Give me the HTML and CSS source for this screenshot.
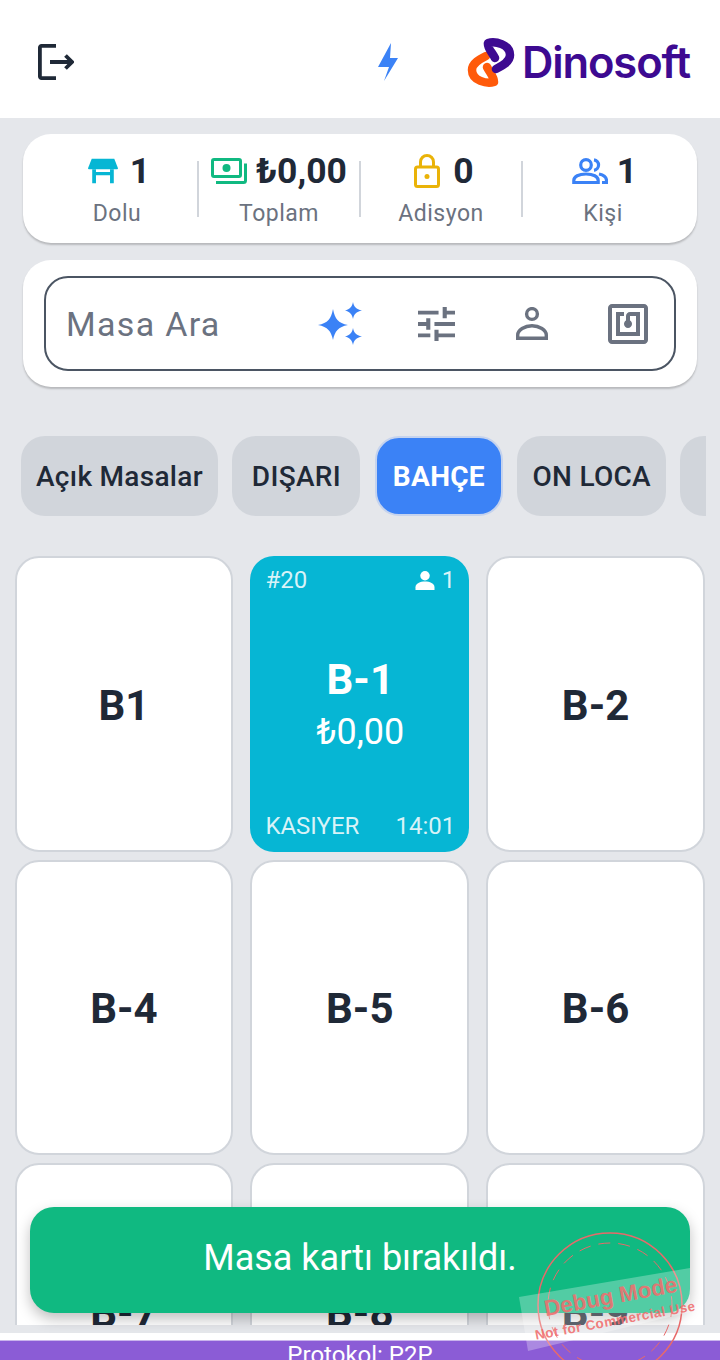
FILE: index.html
```html
<!DOCTYPE html>
<html lang="tr">
<head>
    <meta charset="UTF-8">
    <meta name="viewport" content="width=device-width, initial-scale=1.0">
    <title>Masalar</title>
    <link rel="stylesheet" href="styles.css">
</head>
<body>

    <!-- Top bar -->
    <div class="topbar">
        <svg class="logout-icon" viewBox="0 0 36 36" fill="none" stroke="#1f2937" stroke-width="3.800">
            <path d="M18 1.900H3.500a1.600 1.600 0 0 0-1.600 1.600v29a1.600 1.600 0 0 0 1.600 1.600H18"/>
            <path d="M12 18h22M27.500 11.500 34 18l-6.500 6.500"/>
        </svg>
        <svg class="bolt-icon" viewBox="0 0 22 38" fill="#3b82f6">
            <path d="M14 0 1 24h11L7 38 21 15h-8z"/>
        </svg>
        <div class="logo">
            <svg class="logo-mark" viewBox="0 0 56 56" fill="none" stroke-width="8.500" stroke-linecap="round" stroke-linejoin="round">
                <path stroke="#ff5a0a" d="M24 32C27 38 31 42 31 47C24 49 9 46 9 35C9 28 17 24 23 21"/>
                <path stroke="#3d0a91" d="M32 23C29 17 24 13 25 8C32 6 47 9 47 20C47 27 39 31 33 34"/>
            </svg>
            <span class="logo-text">Dinosoft</span>
        </div>
    </div>

    <!-- Summary -->
    <div class="card stats">
        <div class="stat">
            <div class="stat-value">
                <svg class="stat-icon table-icon" viewBox="0 0 32 26" fill="#06b6d4"><path d="M4 0h24l4 10a1 1 0 0 1-1 1H1a1 1 0 0 1-1-1z"/><path d="M4.500 11h4v3h15v-3h4v15h-4V17.500h-15V26h-4z"/></svg>
                <span>1</span>
            </div>
            <div class="stat-label">Dolu</div>
        </div>
        <div class="stat">
            <div class="stat-value">
                <svg class="stat-icon" viewBox="0 0 36 26" fill="none" stroke="#10b981" stroke-width="3"><rect x="1.500" y="1.500" width="28" height="17" rx="1.500"/><circle cx="15.500" cy="10" r="4" fill="#10b981" stroke="none"/><path d="M34.500 5.500v17a2 2 0 0 1-2 2H5"/></svg>
                <span>₺0,00</span>
            </div>
            <div class="stat-label">Toplam</div>
        </div>
        <div class="stat">
            <div class="stat-value">
                <svg class="stat-icon lock" viewBox="0 0 26 34" fill="none" stroke="#eab308" stroke-width="3"><rect x="1.500" y="13" width="23" height="19.500" rx="2"/><path d="M6.500 13V8a6.500 6.500 0 0 1 13 0v5"/><circle cx="13" cy="22.500" r="2.500" fill="#eab308" stroke="none"/></svg>
                <span>0</span>
            </div>
            <div class="stat-label">Adisyon</div>
        </div>
        <div class="stat">
            <div class="stat-value">
                <svg class="stat-icon users" viewBox="0 0 36 26" fill="none" stroke="#3b82f6" stroke-width="3.200"><circle cx="14" cy="7" r="5.300"/><path d="M1.800 24.500v-2c0-4 5-6.500 12.200-6.500s12.200 2.500 12.200 6.500v2z"/><path d="M22 1.800a5.300 5.300 0 0 1 0 10.500M27 16c4.500 1 7.500 3 7.500 6.500v2H30"/></svg>
                <span>1</span>
            </div>
            <div class="stat-label">Kişi</div>
        </div>
    </div>

    <!-- Search -->
    <div class="card search-card">
        <div class="search-box">
            <span class="search-text">Masa Ara</span>
            <svg class="search-icon sparkle" viewBox="0 0 44 44" fill="#3b82f6">
                <path d="M15 7C17 17 20 21 30 23 20 25 17 29 15 38 13 29 10 25 0 23 10 21 13 17 15 7z"/>
                <path d="M35 0C36 5 38 7 44 8.500 38 10 36 12 35 17 34 12 32 10 27 8.500 32 7 34 5 35 0z"/>
                <path d="M35 26C36 31 38 33 44 34.500 38 36 36 38 35 43 34 38 32 36 27 34.500 32 33 34 31 35 26z"/>
            </svg>
            <svg class="search-icon tune" viewBox="3 3 18 18" fill="#6b7280" preserveAspectRatio="none">
                <path d="M3 17v2h6v-2H3zM3 5v2h10V5H3zm10 16v-2h8v-2h-8v-2h-2v6h2zM7 9v2H3v2h4v2h2V9H7zm14 4v-2H11v2h10zm-6-4h2V7h4V5h-4V3h-2v6z"/>
            </svg>
            <svg class="search-icon person" viewBox="0 0 32 34" fill="none" stroke="#6b7280" stroke-width="3.400">
                <circle cx="16" cy="7" r="5.400"/>
                <path d="M1.700 31.300v-3.300c0-5 7-9.300 14.300-9.300s14.300 4.300 14.300 9.300v3.300z"/>
            </svg>
            <svg class="search-icon nfc" viewBox="2 2 20 20" fill="#6b7280">
                <path d="M20 2H4c-1.100 0-2 .9-2 2v16c0 1.100.9 2 2 2h16c1.100 0 2-.9 2-2V4c0-1.100-.9-2-2-2zm0 18H4V4h16v16zM18 6h-5c-1.100 0-2 .9-2 2v2.280c-.6.35-1 .98-1 1.720 0 1.100.9 2 2 2s2-.9 2-2c0-.74-.4-1.380-1-1.720V8h3v8H8V8h2V6H6v12h12V6z"/>
            </svg>
        </div>
    </div>

    <!-- Areas -->
    <div class="tabs">
        <div class="tab">Açık Masalar</div>
        <div class="tab">DIŞARI</div>
        <div class="tab active">BAHÇE</div>
        <div class="tab">ON LOCA</div>
        <div class="tab"></div>
    </div>

    <!-- Tables -->
    <div class="tables">
        <div class="table-grid">
            <div class="table">B1</div>
            <div class="table busy">
                <div class="table-row">
                    <span>#20</span>
                    <span class="guests">
                        <svg class="guest-icon" viewBox="0 0 20 20" fill="#fff"><circle cx="10" cy="5" r="5"/><path d="M0 20v-3c0-4 5-6 10-6s10 2 10 6v3z"/></svg>
                        1
                    </span>
                </div>
                <div class="table-middle">
                    <div class="table-name">B-1</div>
                    <div class="table-total">₺0,00</div>
                </div>
                <div class="table-row">
                    <span>KASIYER</span>
                    <span>14:01</span>
                </div>
            </div>
            <div class="table">B-2</div>
            <div class="table">B-4</div>
            <div class="table">B-5</div>
            <div class="table">B-6</div>
            <div class="table">B-7</div>
            <div class="table">B-8</div>
            <div class="table">B-9</div>
        </div>
    </div>

    <!-- Footer -->
    <div class="footer-gap"></div>
    <div class="protocol">Protokol: P2P</div>

    <!-- Toast -->
    <div class="toast">Masa kartı bırakıldı.</div>

    <!-- Debug stamp -->
    <svg class="debug-stamp" viewBox="0 0 201 130">
        <circle cx="91" cy="85" r="72" fill="none" stroke="#e86a6a" stroke-width="1.500"/>
        <circle cx="91" cy="85" r="62" fill="none" stroke="#e86a6a" stroke-width="1" stroke-dasharray="12 8"/>
        <polygon points="0,77 171,48 171,92 9,131" fill="rgba(255,255,255,0.28)"/>
        <text class="stamp-big" x="93" y="84" transform="rotate(-10.500 93 84)">Debug Mode</text>
        <text class="stamp-small" x="97" y="105" transform="rotate(-10.500 97 105)">Not for Commercial Use</text>
    </svg>

</body>
</html>
```

FILE: styles.css
```css
/* Global Styles */
* {
    margin: 0;
    padding: 0;
    box-sizing: border-box;
    font-family: 'Roboto', sans-serif;
}

body {
    position: relative;
    display: flex;
    flex-direction: column;
    width: 720px;
    height: 1360px;
    overflow: hidden;
    background: #e5e7eb;
    color: #1f2937;
}

/* Top bar */
.topbar {
    display: flex;
    align-items: center;
    flex: none;
    height: 118px;
    padding: 6px 30px 0 38px;
    background: white;
}

.logout-icon {
    width: 36px;
    height: 36px;
}

.bolt-icon {
    width: 22px;
    height: 38px;
    margin-left: auto;
}

.logo {
    display: flex;
    align-items: center;
    margin-left: 64px;
}

.logo-mark {
    width: 56px;
    height: 56px;
    margin-top: 2px;
}

.logo-text {
    margin-left: 3px;
    font-family: 'Inter', sans-serif;
    font-size: 43.500px;
    font-weight: 600;
    letter-spacing: -1.100px;
    color: #3d0a91;
}

/* Cards */
.card {
    flex: none;
    margin: 0 23px;
    background: white;
    border-radius: 28px;
    box-shadow: 0 2px 2px rgba(0, 0, 0, 0.2);
}

/* Summary */
.stats {
    display: grid;
    grid-template-columns: repeat(4, 162px);
    height: 109px;
    margin-top: 16px;
    padding: 0 13px;
}

.stat {
    position: relative;
    display: flex;
    flex-direction: column;
    align-items: center;
    padding-top: 18px;
}

.stat + .stat::before {
    content: "";
    position: absolute;
    left: -1px;
    top: 27px;
    width: 2px;
    height: 56px;
    background: #d1d5db;
}

.stat-value {
    display: flex;
    align-items: center;
    gap: 9px;
    height: 38px;
    font-size: 35.500px;
    font-weight: 700;
}

.stat-icon {
    width: 36px;
    height: 26px;
}

.table-icon {
    width: 30px;
    margin: 0 3px 0 4px;
}

.stat-icon.lock {
    width: 26px;
    height: 34px;
    margin: 0 4px 0 6px;
}

.users {
    margin-left: 3px;
}

.stat-label {
    margin-top: 10px;
    font-size: 23px;
    color: #6b7280;
    letter-spacing: 0.5px;
}

/* Search */
.search-card {
    height: 127px;
    margin-top: 17px;
    padding: 16px 22px;
}

.search-box {
    position: relative;
    display: flex;
    align-items: center;
    height: 95px;
    margin: 0 -1px;
    padding-left: 20px;
    border: 2px solid #4b5563;
    border-radius: 24px;
}

.search-text {
    font-size: 34px;
    letter-spacing: 1.300px;
    color: #6b7280;
}

.search-icon {
    flex: none;
}

.sparkle {
    width: 44px;
    height: 44px;
    margin-left: auto;
}

.tune {
    width: 37px;
    height: 34px;
    margin-left: 56px;
}

.person {
    width: 32px;
    height: 34px;
    margin-left: 61px;
}

.nfc {
    width: 40px;
    height: 40px;
    margin: 0 26px 0 60px;
}

/* Areas */
.tabs {
    display: flex;
    flex: none;
    gap: 14.500px;
    width: 685px;
    height: 80px;
    margin: 49px 0 0 21px;
    overflow: hidden;
}

.tab {
    flex: none;
    display: flex;
    align-items: center;
    justify-content: center;
    min-width: 128px;
    padding: 0 15px;
    background: #d1d5db;
    border-radius: 24px;
    font-size: 28px;
    font-weight: 500;
    letter-spacing: 0.300px;
}

.tab.active {
    background: #3b82f6;
    border: 2px solid #c5d3ee;
    color: white;
    font-weight: 700;
}

/* Tables */
.tables {
    flex: none;
    height: 769px;
    margin-top: 40px;
    padding: 0 15px 0 14.600px;
    overflow: hidden;
}

.table-grid {
    display: grid;
    grid-template-columns: repeat(3, 1fr);
    grid-auto-rows: 295.600px;
    gap: 8px 17px;
}

.table {
    display: flex;
    align-items: center;
    justify-content: center;
    padding-top: 3px;
    background: white;
    border: 2px solid #d1d5db;
    border-radius: 24px;
    font-size: 42px;
    font-weight: 700;
}

.table.busy {
    flex-direction: column;
    justify-content: space-between;
    align-items: stretch;
    padding: 10px 14px 12px 15px;
    background: #06b6d4;
    border: none;
    color: white;
    font-size: 24px;
    font-weight: 400;
}

.table-row {
    display: flex;
    justify-content: space-between;
    color: rgba(255, 255, 255, 0.85);
}

.guests {
    display: flex;
    align-items: center;
    gap: 7px;
}

.guest-icon {
    width: 20px;
    height: 19px;
}

.table-middle {
    text-align: center;
    margin-top: 3px;
}

.table-name {
    font-size: 42px;
    font-weight: 700;
}

.table-total {
    margin-top: 7px;
    font-size: 36px;
}

/* Footer */
.footer-gap {
    flex: none;
    height: 7px;
    margin-top: 8px;
    background: white;
}

.protocol {
    flex: none;
    height: 20px;
    background: #8b5cd6;
    border-top: 1px solid #c9b4ec;
    color: white;
    font-size: 24px;
    line-height: 28px;
    text-align: center;
}

/* Toast */
.toast {
    position: absolute;
    left: 30px;
    top: 1207px;
    width: 660px;
    height: 106px;
    background: #10b981;
    border-radius: 24px;
    box-shadow: 0 6px 14px rgba(0, 0, 0, 0.25);
    color: white;
    font-size: 36px;
    line-height: 103px;
    text-align: center;
}

/* Debug stamp */
.debug-stamp {
    position: absolute;
    left: 519px;
    top: 1220px;
    width: 201px;
    height: 130px;
    overflow: visible;
}

.stamp-big,
.stamp-small {
    font-family: 'Liberation Sans', sans-serif;
    font-weight: 700;
    fill: rgba(240, 110, 110, 0.9);
    text-anchor: middle;
}

.stamp-big {
    font-size: 22.500px;
}

.stamp-small {
    font-size: 13.500px;
    letter-spacing: 0.400px;
}
```
